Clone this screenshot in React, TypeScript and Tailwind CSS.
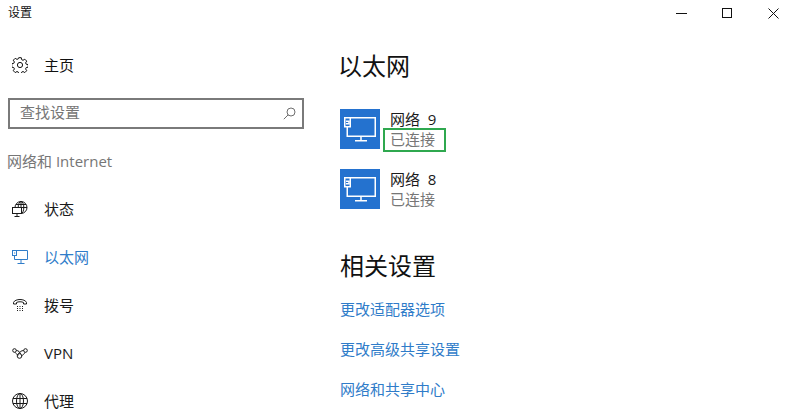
import type { ReactNode } from "react";

const stroke = { fill: "none", stroke: "currentColor", strokeWidth: 1 };

function GearIcon() {
  return (
    <svg width="16" height="16" viewBox="0 0 16 16" {...stroke}>
      <circle cx="8" cy="8" r="2.6" />
      <path d="M6.7.7h2.6l.4 2 1.3.6 1.8-1.1 1.9 1.9-1.1 1.8.6 1.3 2 .4v2.6l-2 .4-.6 1.3 1.1 1.8-1.9 1.9-1.8-1.1-1.3.6-.4 2H6.7l-.4-2-1.3-.6-1.8 1.1-1.9-1.9 1.1-1.8-.6-1.3-2-.4V6.7l2-.4.6-1.3-1.1-1.8 1.9-1.9 1.8 1.1 1.3-.6z" />
    </svg>
  );
}

function StatusIcon() {
  return (
    <svg width="16" height="16" viewBox="0 0 16 16" {...stroke}>
      <circle cx="9" cy="6.500" r="6" />
      <ellipse cx="9" cy="6.500" rx="2.800" ry="6" />
      <path d="M9 .5v8M3 6.500h12M4 3.500h10" />
      <rect x=".5" y="6.500" width="9" height="6" fill="#fff" />
      <path d="M5 12.500v3M2.500 15.500h5" />
    </svg>
  );
}

function EthernetIcon() {
  return (
    <svg width="16" height="16" viewBox="0 0 16 16" {...stroke}>
      <path d="M4.500 1.500h11v9h-13V7" />
      <rect x=".5" y="1.500" width="4" height="5" fill="#fff" />
      <path d="M2 4h1.200M9 10.500v3.500M5.500 14.500h7" />
    </svg>
  );
}

function DialIcon() {
  return (
    <svg width="16" height="16" viewBox="0 0 16 16" {...stroke}>
      <path d="M1.500 7V5.500C3 1.500 13 1.500 14.500 5.500V7h-3V5.500c-1.500-1-5.500-1-7 0V7z" />
      <path d="M5 9.500h1M7.500 9.500h1M10 9.500h1M5 11.500h1M7.500 11.500h1M10 11.500h1M5 13.500h1M7.500 13.500h1M10 13.500h1" />
    </svg>
  );
}

function VpnIcon() {
  return (
    <svg width="16" height="16" viewBox="0 0 16 16" {...stroke}>
      <circle cx="2.500" cy="5.500" r="1.800" />
      <circle cx="13.500" cy="5.500" r="1.800" />
      <circle cx="7.500" cy="11" r="2.300" />
      <path d="M4.300 5.500C6.500 5.500 8 7 8.500 9M11.700 5.500C9.500 5.500 7 7 6.500 9" />
      <path d="M3 7.300c1 1.500 2 2.200 3.500 2.700M13 7.300c-.5 1.500-2 2.700-3.500 3.500" />
    </svg>
  );
}

function GlobeIcon() {
  return (
    <svg width="16" height="16" viewBox="0 0 16 16" {...stroke}>
      <circle cx="8" cy="8" r="7.500" />
      <ellipse cx="8" cy="8" rx="3.500" ry="7.500" />
      <path d="M8 .5v15M1 5.500h14M1 10.500h14" />
    </svg>
  );
}

function SearchIcon() {
  return (
    <svg width="13" height="13" viewBox="0 0 13 13" fill="none" stroke="#6e6e6e" strokeWidth="1">
      <circle cx="8" cy="5" r="4" />
      <path d="M5.200 7.800.8 12.200" />
    </svg>
  );
}

function TileIcon() {
  return (
    <svg width="40" height="40" viewBox="0 0 40 40" fill="none" stroke="#fff" strokeWidth="1.500">
      <path d="M10 8.750h25.250v18.500H7.250V18" />
      <rect x="4.750" y="8.750" width="5.500" height="9" fill="#2472cf" />
      <path d="M6 12.250h3v2.500H6M21 27.250v4.500M15 31.750h12" />
    </svg>
  );
}

function NavRow({ icon, label, active }: { icon: ReactNode; label: string; active?: boolean }) {
  return (
    <div className={`flex h-12 items-center pl-3 text-[15px] ${active ? "text-[#2f7cc9]" : "text-[#1a1a1a]"}`}>
      <span className="flex w-8 shrink-0">{icon}</span>
      <span>{label}</span>
    </div>
  );
}

function NetworkRow({ num, highlight }: { num: string; highlight?: boolean }) {
  return (
    <div className="flex h-10 items-center gap-2.5 bg-white">
      <div className="h-10 w-10 bg-[#2472cf]">
        <TileIcon />
      </div>
      <div className="text-[15px] leading-5">
        <div className="text-[#1a1a1a]">网络&nbsp;&nbsp;{num}</div>
        <div className="relative text-[#767676]">
          已连接
          {highlight && (
            <span className="absolute -top-[1px] -left-[7px] h-6 w-[63px] border-2 border-[#2fa84f]" />
          )}
        </div>
      </div>
    </div>
  );
}

function SideLink({ label }: { label: string }) {
  return <div className="flex h-10 items-center text-[15px] text-[#2f7cc9]">{label}</div>;
}

function HomeRow() {
  return (
    <div className="mt-[15px] flex h-12 items-center pl-3 text-[15px] text-[#111]">
      <span className="flex w-8 shrink-0">
        <GearIcon />
      </span>
      <span>主页</span>
    </div>
  );
}

export default function App() {
  return (
    <div className="relative h-[414px] w-[786px] overflow-hidden bg-white font-['Open_Sans','Noto_Sans_CJK_SC',sans-serif]">
      <div className="absolute top-0 -right-[10px] flex h-[26px]">
        <div className="flex w-[46px] items-center justify-center">
          <div className="h-px w-[11px] bg-[#111]" />
        </div>
        <div className="flex w-[46px] items-center justify-center">
          <div className="h-[10px] w-[10px] border border-[#111]" />
        </div>
        <div className="flex w-[46px] items-center justify-center">
          <svg width="11" height="11" viewBox="0 0 11 11" stroke="#111" strokeWidth="1">
            <path d="M.5.5l10 10M10.500.5l-10 10" />
          </svg>
        </div>
      </div>

      <div className="flex">
        <aside className="w-[340px] shrink-0">
          <div className="flex h-[26px] items-center pl-2 text-xs text-[#111]">设置</div>
          <HomeRow />
          <div className="mt-[9px] pr-9 pl-2">
            <div className="flex h-[31px] items-center justify-between border-2 border-[#7a7a7a] pr-1.5 pl-2.5 text-[15px] text-[#767676]">
              <span className="-mt-0.5">查找设置</span>
              <SearchIcon />
            </div>
          </div>
          <div className="mt-[22px] h-[20px] pl-[7px] text-[15px] leading-5 text-[#767676]">网络和 Internet</div>
          <div className="mt-[14px]">
            <NavRow icon={<StatusIcon />} label="状态" />
            <NavRow icon={<EthernetIcon />} label="以太网" active />
            <NavRow icon={<DialIcon />} label="拨号" />
            <NavRow icon={<VpnIcon />} label="VPN" />
            <NavRow icon={<GlobeIcon />} label="代理" />
          </div>
        </aside>

        <main className="flex-1 pt-[48px]">
          <h1 className="-ml-0.5 h-9 text-2xl leading-9 text-[#111]">以太网</h1>
          <div className="mt-[25px] flex flex-col gap-5">
            <NetworkRow num="9" highlight />
            <NetworkRow num="8" />
          </div>
          <h2 className="mt-[39px] h-9 text-2xl leading-9 text-[#111]">相关设置</h2>
          <div className="mt-[5px]">
            <SideLink label="更改适配器选项" />
            <SideLink label="更改高级共享设置" />
            <SideLink label="网络和共享中心" />
          </div>
        </main>
      </div>
    </div>
  );
}
